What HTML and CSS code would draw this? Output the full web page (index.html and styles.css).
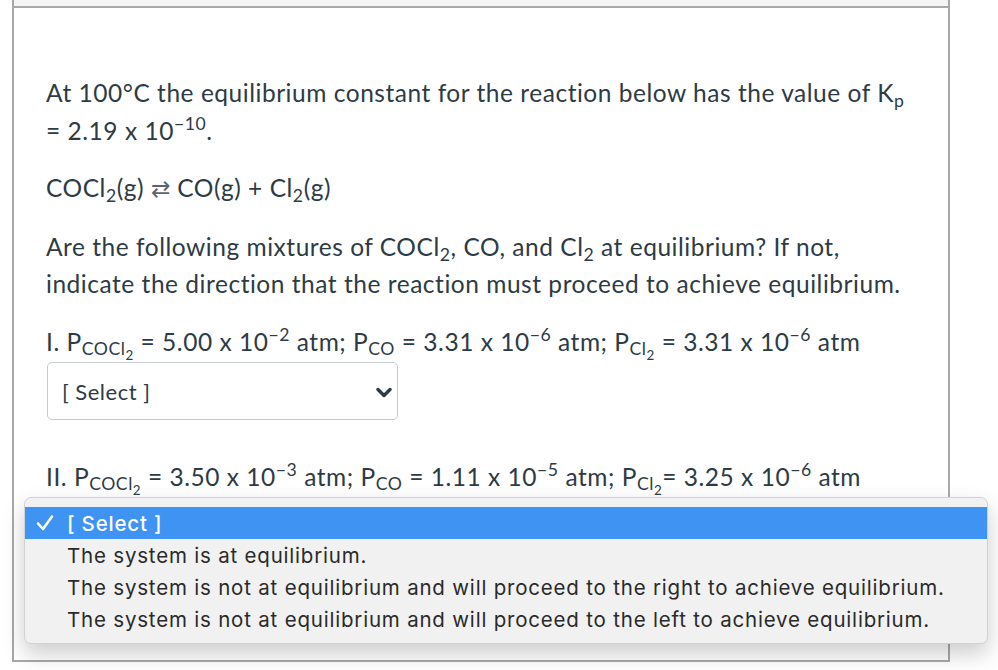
FILE: index.html
```html
<!DOCTYPE html>
<html>
<head>
<meta charset="utf-8">
<link rel="stylesheet" href="styles.css">
</head>
<body>
<div class="frame">
  <div class="frame-header"></div>
  <div class="content">
    <p>At 100°C the equilibrium constant for the reaction below has the value of K<span class="sub">p</span> = 2.19 x 10<span class="sup">−10</span>.</p>
    <p>COCl<span class="sub">2</span>(g) <span class="arrow">⇄</span> CO(g) + Cl<span class="sub">2</span>(g)</p>
    <p>Are the following mixtures of COCl<span class="sub">2</span>, CO, and Cl<span class="sub">2</span> at equilibrium? If not, indicate the direction that the reaction must proceed to achieve equilibrium.</p>
    <p class="q">I. P<span class="psub">COCl<span class="sub2">2</span></span> = 5.00 x 10<span class="sup">−2</span> atm; P<span class="psub">CO</span> = 3.31 x 10<span class="sup">−6</span> atm; P<span class="psub">Cl<span class="sub2">2</span></span> = 3.31 x 10<span class="sup">−6</span> atm</p>
    <div class="select">
      <span>[ Select ]</span>
      <svg class="chev" width="16" height="11" viewBox="0 0 16 11"><polyline points="2,2.5 8,8.5 14,2.5" fill="none" stroke="#2d3b45" stroke-width="3.4" stroke-linecap="round" stroke-linejoin="round"/></svg>
    </div>
    <p class="q">II. P<span class="psub">COCl<span class="sub2">2</span></span> = 3.50 x 10<span class="sup">−3</span> atm; P<span class="psub">CO</span> = 1.11 x 10<span class="sup">−5</span> atm; P<span class="psub">Cl<span class="sub2">2</span></span>= 3.25 x 10<span class="sup">−6</span> atm</p>
    <div class="select">
      <span>[ Select ]</span>
      <svg class="chev" width="16" height="11" viewBox="0 0 16 11"><polyline points="2,2.5 8,8.5 14,2.5" fill="none" stroke="#2d3b45" stroke-width="3.4" stroke-linecap="round" stroke-linejoin="round"/></svg>
    </div>
  </div>
</div>
<div class="popup">
  <div class="opt selected">
    <svg class="check" width="20" height="20" viewBox="0 0 20 20"><polyline points="3,10.5 8,16 17,3.5" fill="none" stroke="#ffffff" stroke-width="2.6" stroke-linecap="round" stroke-linejoin="round"/></svg>
    <span>[ Select ]</span>
  </div>
  <div class="opt"><span>The system is at equilibrium.</span></div>
  <div class="opt"><span>The system is not at equilibrium and will proceed to the right to achieve equilibrium.</span></div>
  <div class="opt"><span>The system is not at equilibrium and will proceed to the left to achieve equilibrium.</span></div>
</div>
</body>
</html>
```

FILE: styles.css
```css
html, body {
  margin: 0;
  padding: 0;
  background: #ffffff;
}

.frame {
  margin-left: 12px;
  width: 938px;
  box-sizing: border-box;
  border-left: 2px solid #a9a9a9;
  border-right: 2px solid #a9a9a9;
  border-bottom: 2px solid #a9a9a9;
}

.frame-header {
  height: 6px;
  background: #f5f5f5;
  border-bottom: 2px solid #a9a9a9;
}

.content {
  height: 652px;
  box-sizing: border-box;
  padding: 66px 32px 0 32px;
  font-family: Lato, "Liberation Sans", sans-serif;
  font-size: 24.5px;
  letter-spacing: 0.53px;
  line-height: 37.5px;
  color: #2d3b45;
}

.content p {
  margin: 0 0 20px 0;
}

.content p.q {
  margin: 0;
}

.sub {
  font-size: 0.72em;
  line-height: 0;
  vertical-align: -0.3em;
}

.sup {
  font-size: 0.72em;
  line-height: 0;
  vertical-align: 0.55em;
}

.psub {
  font-size: 0.72em;
  line-height: 0;
  vertical-align: -0.25em;
}

.sub2 {
  font-size: 0.76em;
  line-height: 0;
  vertical-align: -0.4em;
}

.arrow {
  font-family: "DejaVu Sans", sans-serif;
  font-size: 0.95em;
  letter-spacing: 0;
  color: #5a656d;
}

.select {
  width: 351px;
  height: 58px;
  box-sizing: border-box;
  margin: 2px 0 38px 1px;
  border: 1px solid #c7cdd1;
  border-radius: 5px;
  background: #ffffff;
  display: flex;
  align-items: center;
  justify-content: space-between;
  padding: 2px 5px 0 14px;
  font-size: 22px;
  letter-spacing: 0.5px;
}

.chev {
  display: block;
}

.popup {
  position: absolute;
  left: 24px;
  top: 497px;
  width: 964px;
  box-sizing: border-box;
  padding: 9px 0 8px 0;
  background: #f1f1f1;
  border: 1px solid #d2d2d2;
  border-radius: 7px;
  box-shadow: 0 10px 22px rgba(0, 0, 0, 0.2);
  font-family: Inter, "Liberation Sans", sans-serif;
  font-size: 20.5px;
  letter-spacing: 0.8px;
  color: #2a2a2a;
}

.opt {
  height: 32px;
  display: flex;
  align-items: center;
  padding-left: 42px;
}

.opt.selected {
  position: relative;
  background: #3f93f3;
  color: #ffffff;
  font-weight: 500;
}

.check {
  position: absolute;
  left: 10px;
  top: 6px;
}
```
